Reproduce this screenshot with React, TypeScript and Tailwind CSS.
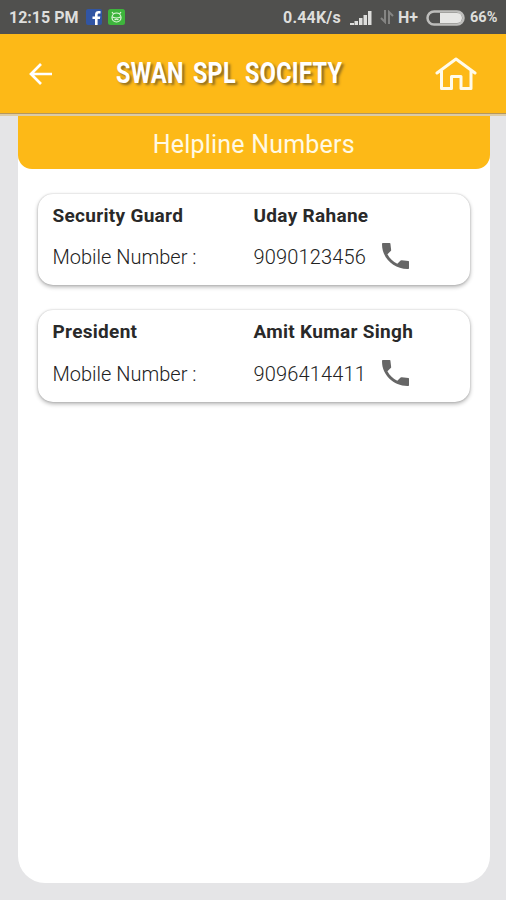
import React from "react";

const contacts = [
  { role: "Security Guard", name: "Uday Rahane", phone: "9090123456" },
  { role: "President", name: "Amit Kumar Singh", phone: "9096414411" },
];

function PhoneIcon() {
  return (
    <svg className="mb-[2px] ml-[16px] h-[26px] w-[27px] shrink-0" viewBox="3 3 18 18" preserveAspectRatio="none" fill="#666666">
      <path d="M21 15.8Q21 15.460 20.600 15.400L16.200 14.900Q15.700 14.850 15.400 15.180L13.210 17.370C10.380 15.930 8.060 13.620 6.620 10.780L8.820 8.580Q9.150 8.250 9.090 7.800L8.600 3.400Q8.540 3 8.100 3H3.500Q3.030 3 3.030 3.500C2.700 13.180 10.820 21.300 20.500 20.970Q21 20.970 21 20.500Z" />
    </svg>
  );
}

function StatusBar() {
  return (
    <div className="flex h-[34px] items-center bg-[#50504e] text-[#dededc]">
      <span className="ml-[9px] w-[77px] whitespace-nowrap pt-[2px] text-[16px] font-bold leading-[34px]">12:15 PM</span>
      <svg className="h-4 w-4" viewBox="0 0 16 16">
        <rect width="16" height="16" rx="2" fill="#3155a3" />
        <path d="M9 16V10H6.5V7.500H9V5.500C9 3 10.500 2 12.500 2H14.500V4.500H13C12 4.500 11.600 5 11.600 6V7.500H14.300L13.900 10H11.600V16Z" fill="#fff" />
      </svg>
      <svg className="ml-[6px] h-4 w-[17px]" viewBox="0 0 17 16">
        <rect width="17" height="16" rx="2.500" fill="#3eb43c" />
        <g fill="none" stroke="#e5f7df" strokeWidth="1.200">
          <circle cx="8.500" cy="8.500" r="4.500" />
          <path d="M5.500 5L4 3M11.500 5L13 3M4.500 8Q8.500 10 12.500 8M6.500 11Q8.500 9.500 10.500 11" />
        </g>
      </svg>
      <span className="ml-[158px] w-[59px] whitespace-nowrap pt-[2px] text-[16px] font-bold leading-[34px] tracking-[0.2px]">0.44K/s</span>
      <svg className="ml-[8px] mt-[2px] h-[15px] w-[22px]" viewBox="0 0 22 15" fill="#dededc">
        <path d="M0 12h4v2H0zM4.500 10h3.500v4h-3.500zM9 7h3.500v7H9zM13.500 4h3.500v10h-3.500zM18 0h3.500v14H18z" />
      </svg>
      <svg className="ml-[8px] h-[14px] w-[14px]" viewBox="0 0 14 14" fill="none" stroke="#858583" strokeWidth="2">
        <path d="M5 0V12L1 8M9 14V2L13 6" />
      </svg>
      <span className="ml-[4px] w-[21px] whitespace-nowrap pt-[2px] text-[16px] font-bold">H+</span>
      <svg className="ml-[7px] mt-[1px] h-[16px] w-[39px]" viewBox="0 0 39 16">
        <rect x="1.500" y="1.500" width="36" height="13" rx="6.500" fill="#50504e" stroke="#bdbdbb" strokeWidth="2.500" />
        <path d="M14 3H31Q36 3 36 8T31 13H14Z" fill="#e6e6e4" />
      </svg>
      <span className="ml-[5px] whitespace-nowrap pt-[2px] text-[14.5px] font-bold">66%</span>
    </div>
  );
}

export default function App() {
  return (
    <div className="flex h-[900px] w-[506px] flex-col overflow-hidden bg-[#e5e5e7] font-['Roboto',sans-serif]">
      <StatusBar />
      <header className="flex h-[80px] shrink-0 items-center border-b-[1.5px] border-[#b5975c] bg-[#fdb917]">
        <svg className="ml-[29px] h-[22px] w-[23px]" viewBox="0 0 23 22" fill="none" stroke="#fff" strokeWidth="2.700">
          <path d="M12 1L2 11L12 21M2 11H23" />
        </svg>
        <h1 className="ml-[64px] w-[320px] origin-left scale-x-[0.78] whitespace-nowrap pb-[2px] text-[30px] font-bold leading-[40px] tracking-[0.35px] text-white [text-shadow:3px_2px_3px_#8a6a22] [word-spacing:4px]">
          SWAN SPL SOCIETY
        </h1>
        <svg className="-ml-px h-[34px] w-[42px] shrink-0" viewBox="0 0 42 34" fill="none" stroke="#fffbea" strokeWidth="3" strokeLinejoin="round" strokeLinecap="round">
          <path d="M2 16L21 2L40 16M6.500 14V31.500H16.500V19.500H26V31.500H36V14" />
        </svg>
      </header>
      <div className="h-[2px] shrink-0 bg-[#dccba6]" />
      <main className="ml-[17.5px] flex h-[767px] w-[472.5px] flex-col rounded-b-[27px] bg-white">
        <h2 className="flex h-[53px] shrink-0 items-center justify-center rounded-b-[14px] bg-[#fdb917] pt-[4px] text-[25px] tracking-[0.2px] text-[#fff9e4]">
          Helpline Numbers
        </h2>
        <div className="mx-[20.5px] mt-[24.5px] flex flex-col gap-[25px]">
          {contacts.map((c) => (
            <section
              key={c.name}
              className="flex h-[91.500px] flex-col rounded-[15px] bg-white pl-[14.5px] pt-[10.5px] shadow-[0_2px_4px_rgba(0,0,0,0.3),0_0_2px_rgba(0,0,0,0.2)]"
            >
              <div className="flex h-[24px] items-center text-[19px] font-bold tracking-[0.3px] text-[#292929]">
                <span className="w-[201px]">{c.role}</span>
                <span>{c.name}</span>
              </div>
              <div className="mt-[16px] flex h-[26px] items-center text-[20px] font-light text-[#222]">
                <span className="w-[201px]">Mobile Number :</span>
                <span className="w-[112px] tracking-[0.15px]">{c.phone}</span>
                <PhoneIcon />
              </div>
            </section>
          ))}
        </div>
      </main>
    </div>
  );
}
